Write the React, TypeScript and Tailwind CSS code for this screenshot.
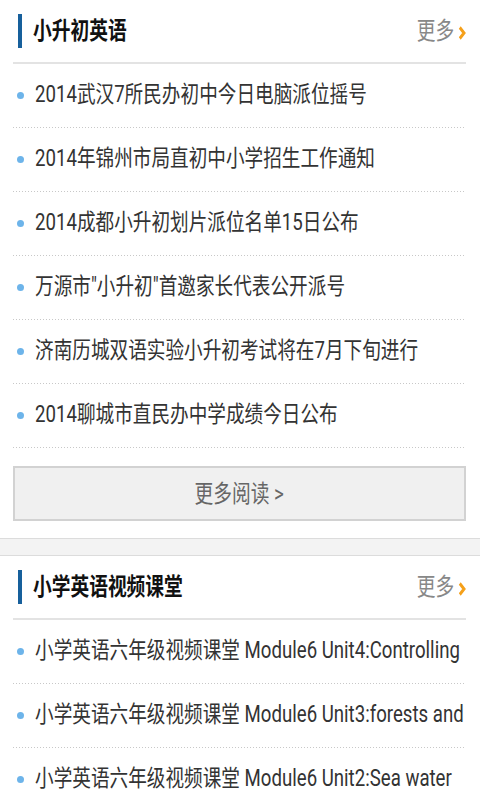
import React from "react";

const font = { fontFamily: '"Roboto", "Noto Sans CJK SC", sans-serif' };

function Chevron() {
  return (
    <svg width="10" height="14" viewBox="0 0 10 14" className="ml-[5px] mt-[3px]">
      <polyline points="2,1.5 7.5,7 2,12.5" fill="none" stroke="#f5a01a" strokeWidth="3.4" strokeLinejoin="miter" />
    </svg>
  );
}

function Header({ title }: { title: string }) {
  return (
    <div>
      <div className="flex h-[62px] items-center justify-between">
        <div className="flex items-center">
          <div className="ml-[5px] h-[34px] w-[4px] bg-[#17609c]" />
          <div className="ml-[11px] origin-left scale-x-[0.78] whitespace-nowrap text-[24px] font-bold text-[#111]">
            {title}
          </div>
        </div>
        <div className="flex origin-right scale-x-[0.78] items-center">
          <span className="text-[24px] text-[#888]">更多</span>
          <Chevron />
        </div>
      </div>
      <div className="h-[2px] bg-[#e3e3e3]" />
    </div>
  );
}

function Row({ text }: { text: string }) {
  return (
    <div>
      <div className="flex h-[63px] items-center overflow-hidden">
        <div className="ml-[4px] h-[7px] w-[7px] shrink-0 rounded-full bg-[#6db4ea]" />
        <div className="ml-[11px] min-w-0 flex-1 overflow-hidden">
          <div className="origin-left scale-x-[0.81] whitespace-nowrap text-[23px] text-[#333]">{text}</div>
        </div>
      </div>
      <div className="h-px bg-[linear-gradient(to_right,#c8c8c8_1px,transparent_1px)] bg-[length:3px_1px] bg-repeat-x" />
    </div>
  );
}

export default function App() {
  const list1 = [
    "2014武汉7所民办初中今日电脑派位摇号",
    "2014年锦州市局直初中小学招生工作通知",
    "2014成都小升初划片派位名单15日公布",
    '万源市"小升初"首邀家长代表公开派号',
    "济南历城双语实验小升初考试将在7月下旬进行",
    "2014聊城市直民办中学成绩今日公布",
  ];
  const list2 = [
    "小学英语六年级视频课堂 Module6 Unit4:Controlling",
    "小学英语六年级视频课堂 Module6 Unit3:forests and",
    "小学英语六年级视频课堂 Module6 Unit2:Sea water",
  ];
  return (
    <div className="h-[800px] w-[480px] overflow-hidden bg-white" style={font}>
      <div className="px-[13px] pr-[14px]">
        <Header title="小升初英语" />
        {list1.map((t) => (
          <Row key={t} text={t} />
        ))}
        <div className="mt-[18px] flex h-[55px] items-center justify-center border-2 border-[#d2d2d2] bg-[#f0f0f0]">
          <span className="scale-x-[0.78] whitespace-nowrap text-[24px] text-[#666]">更多阅读 &gt;</span>
        </div>
      </div>
      <div className="mt-[17px] h-[18px] border-y border-[#dcdcdc] bg-[#f3f3f3]" />
      <div className="px-[13px] pr-[14px]">
        <Header title="小学英语视频课堂" />
        {list2.map((t) => (
          <Row key={t} text={t} />
        ))}
      </div>
    </div>
  );
}
